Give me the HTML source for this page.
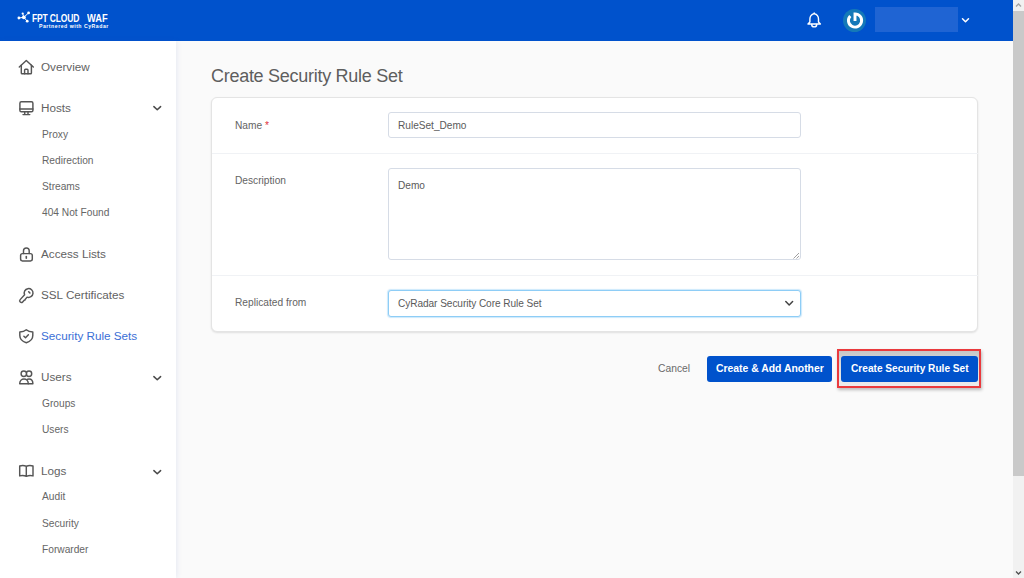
<!DOCTYPE html>
<html><head><meta charset="utf-8">
<style>
*{margin:0;padding:0;box-sizing:border-box}
html,body{width:1024px;height:578px;overflow:hidden;background:#fafafa;font-family:"Liberation Sans",sans-serif}
.a{position:absolute}
svg{position:absolute;overflow:visible}
.t{position:absolute;white-space:nowrap;line-height:1}
#hdr{left:0;top:0;width:1013px;height:41px;background:#0052cc}
#sb{left:0;top:41px;width:175.5px;height:537px;background:#fff;box-shadow:1px 0 5px rgba(60,90,190,.10)}
.m{font-size:11.7px;color:#626262;left:41px}
.s{font-size:10.2px;color:#666;left:42px}
.ico{left:14px;width:26px;height:24px;fill:none;stroke:#555;stroke-width:1.45;stroke-linecap:round;stroke-linejoin:round}
.chv{left:146px;width:22px;height:20px;fill:none;stroke:#4a4a4a;stroke-width:1.5;stroke-linecap:round;stroke-linejoin:round}
#card{left:210.5px;top:96.5px;width:767.5px;height:235px;background:#fff;border:1px solid #e4e4e4;border-radius:6px;box-shadow:0 1px 2px rgba(0,0,0,.11)}
.lbl{font-size:10.2px;color:#646464;left:235px}
.inp{position:absolute;left:387.5px;width:413.5px;background:#fff;border:1px solid #d6dce6;border-radius:3px}
.val{font-size:10.1px;color:#5a5a5a;left:398px}
.sep{position:absolute;left:211.5px;width:766px;height:1px;background:#f0f2f5}
.btn{position:absolute;top:356px;height:26px;background:#0052cc;border-radius:3px}
.bt{font-size:10.4px;font-weight:bold;color:#fff}
</style></head><body>
<div id="hdr" class="a"></div>

<!-- logo -->
<svg style="left:0;top:0;width:40px;height:40px" viewBox="0 0 40 40">
 <g stroke="#fff" stroke-width="1" fill="none">
  <line x1="23.8" y1="17.3" x2="18.9" y2="18"/>
  <line x1="23.8" y1="17.3" x2="22.7" y2="13.5"/>
  <line x1="23.8" y1="17.3" x2="28.6" y2="12.9"/>
  <line x1="23.8" y1="17.3" x2="27.2" y2="21.2"/>
 </g>
 <g fill="#fff">
  <circle cx="23.8" cy="17.3" r="1.9"/>
  <circle cx="18.9" cy="18" r="1.4"/>
  <circle cx="22.7" cy="13.5" r="1.1"/>
  <circle cx="28.6" cy="12.9" r="1.4"/>
  <circle cx="27.2" cy="21.2" r="1.4"/>
 </g>
</svg>
<div class="t" style="left:31.5px;top:12.6px;font-size:11.2px;font-weight:bold;color:#fff;transform:scaleX(.76);transform-origin:0 0;letter-spacing:-0.2px">FPT CLOUD</div>
<div class="t" style="left:86.5px;top:12.6px;font-size:11.2px;font-weight:bold;color:#fff;transform:scaleX(.83);transform-origin:0 0">WAF</div>
<div class="t" style="left:39px;top:23.6px;font-size:5.2px;font-weight:bold;color:#fff;letter-spacing:0.5px">Partnered with CyRadar</div>

<!-- bell -->
<svg style="left:800px;top:8px;width:28px;height:24px;fill:none;stroke:#fff;stroke-width:1.4;stroke-linejoin:round;stroke-linecap:round" viewBox="0 0 28 24">
 <path d="M14.2,5.6 C11.5,6.3 9.9,8.5 9.9,11 V14 L8,16 H20.4 L18.5,14 V11 C18.5,8.5 16.9,6.3 14.2,5.6Z"/>
 <path d="M11.7,16.4 A2.5,2.5 0 0 0 16.7,16.4"/>
 <path d="M14.2,5.6 V4.9"/>
</svg>
<!-- gravatar -->
<div class="a" style="left:843px;top:8.7px;width:23px;height:23px;border-radius:50%;background:#1479b8"></div>
<svg style="left:0;top:0;width:1px;height:1px;fill:none;stroke:#fff;stroke-width:2.9" viewBox="0 0 1 1">
 <path d="M855,21 V13.9 A6.6,6.6 0 1 1 850.3,15.9"/>
</svg>
<div class="a" style="left:875px;top:7px;width:83px;height:25px;background:#1f64d3"></div>
<svg style="left:0;top:0;width:1px;height:1px;fill:none;stroke:#fff;stroke-width:1.5;stroke-linecap:round;stroke-linejoin:round" viewBox="0 0 1 1">
 <path d="M962.5,18.8 L965.5,21.8 L968.5,18.8"/>
</svg>

<div id="sb" class="a"></div>

<!-- scrollbar -->
<div class="a" style="left:1013px;top:0;width:11px;height:578px;background:#f1f1f1"></div>
<div class="a" style="left:1013px;top:11px;width:11px;height:465px;background:#c9c9c9"></div>
<svg style="left:1013px;top:0;width:11px;height:578px;fill:none;stroke:#a3a3a3;stroke-width:1.3" viewBox="0 0 11 578">
 <path d="M3,6.5 L5.5,4 L8,6.5"/>
 <path d="M3,571.5 L5.5,574 L8,571.5" stroke="#505050"/>
</svg>

<!-- sidebar icons -->
<svg class="ico" style="top:56px" viewBox="0 0 26 24">
 <path d="M5.3,11 L12.3,4.5 L19.3,11"/>
 <path d="M7.3,9.3 V17 Q7.3,17.8 8.1,17.8 H16.6 Q17.4,17.8 17.4,17 V9.3"/>
 <path d="M10.6,17.8 V14.2 Q10.6,13.3 11.5,13.3 H13.1 Q14,13.3 14,14.2 V17.8"/>
</svg>
<svg class="ico" style="top:97px" viewBox="0 0 26 24">
 <rect x="5.9" y="4.8" width="13" height="10" rx="1.4"/>
 <path d="M5.9,11.9 H18.9"/>
 <path d="M10.7,14.8 V17.6 M14,14.8 V17.6 M9,17.6 H15.8"/>
</svg>
<svg class="ico" style="top:243px" viewBox="0 0 26 24">
 <rect x="6.6" y="10.6" width="11.7" height="7.3" rx="1.8"/>
 <path d="M9.5,10.6 V7.8 A2.85,2.85 0 0 1 15.2,7.8 V10.6"/>
 <path d="M12.3,13.6 V15.2" stroke-width="1.6"/>
</svg>
<svg class="ico" style="top:284px" viewBox="0 0 26 24">
 <path d="M10.60,10.82 L6.15,15.63 A1.7,1.7 0 0 0 8.65,17.94 L10.2,16.3 L10.9,16.1 L11.3,15.2 L13.09,13.13 A4.4,4.4 0 1 0 10.60,10.82 Z"/>
 <path d="M14.7,7.8 L15.9,9" stroke-width="1.6"/>
</svg>
<svg class="ico" style="top:325px" viewBox="0 0 26 24">
 <path d="M12.3,4.7 C10.5,6.2 8.5,6.8 5.8,7 V10.5 C5.8,14.3 8.5,16.5 12.3,17.8 C16.1,16.5 18.8,14.3 18.8,10.5 V7 C16.1,6.8 14.1,6.2 12.3,4.7Z"/>
 <path d="M9.9,11.3 L11.5,12.8 L14.4,9.8"/>
</svg>
<svg class="ico" style="top:366px" viewBox="0 0 26 24">
 <circle cx="15.0" cy="7.7" r="2.7"/>
 <path d="M14.2,17.8 H18.9 C18.9,14.6 17,12.9 15,12.9 C14,12.9 13.2,13.3 12.6,13.8"/>
 <circle cx="9.8" cy="7.7" r="2.7" fill="#fff"/>
 <path d="M5.7,17.8 C5.7,14.6 7.8,12.9 10,12.9 C12.2,12.9 14.3,14.6 14.3,17.8 Z" fill="#fff"/>
</svg>
<svg class="ico" style="top:459px" viewBox="0 0 26 24">
 <path d="M5.7,7 Q9,6 12.3,7.2 Q15.6,6 19,7 V16.9 Q15.6,15.9 12.3,17.3 Q9,15.9 5.7,16.9 Z M12.3,7.2 V17.3"/>
</svg>
<svg class="chv" style="top:98px" viewBox="0 0 22 20"><path d="M7.9,8.6 L11.25,11.8 L14.6,8.6"/></svg>
<svg class="chv" style="top:368px" viewBox="0 0 22 20"><path d="M7.9,8.6 L11.25,11.8 L14.6,8.6"/></svg>
<svg class="chv" style="top:462px" viewBox="0 0 22 20"><path d="M7.9,8.6 L11.25,11.8 L14.6,8.6"/></svg>

<!-- sidebar text -->
<div class="t m" style="top:61.3px">Overview</div>
<div class="t m" style="top:102.4px">Hosts</div>
<div class="t s" style="top:129.7px">Proxy</div>
<div class="t s" style="top:155.7px">Redirection</div>
<div class="t s" style="top:182px">Streams</div>
<div class="t s" style="top:208.2px">404 Not Found</div>
<div class="t m" style="top:248.2px">Access Lists</div>
<div class="t m" style="top:289.1px">SSL Certificates</div>
<div class="t m" style="top:330.2px;color:#3b6fd6">Security Rule Sets</div>
<div class="t m" style="top:371.4px">Users</div>
<div class="t s" style="top:398.8px">Groups</div>
<div class="t s" style="top:424.8px">Users</div>
<div class="t m" style="top:465.3px">Logs</div>
<div class="t s" style="top:492.3px">Audit</div>
<div class="t s" style="top:518.6px">Security</div>
<div class="t s" style="top:544.6px">Forwarder</div>

<!-- title -->
<div class="t" style="left:211px;top:67.3px;font-size:18px;letter-spacing:-0.28px;color:#5e5e5e">Create Security Rule Set</div>

<div id="card" class="a"></div>
<div class="sep" style="top:153px"></div>
<div class="sep" style="top:275px"></div>

<div class="t lbl" style="top:121px">Name <span style="color:#e0303a">*</span></div>
<div class="inp" style="top:112px;height:26px"></div>
<div class="t val" style="top:120.6px">RuleSet_Demo</div>

<div class="t lbl" style="top:175.8px">Description</div>
<div class="inp" style="top:168px;height:92.3px"></div>
<div class="t val" style="top:180.9px">Demo</div>
<svg style="left:0;top:0;width:1px;height:1px;fill:none;stroke:#888;stroke-width:0.8" viewBox="0 0 1 1">
 <path d="M793.5,258.5 L799,253 M796.5,258.5 L799,256"/>
</svg>

<div class="t lbl" style="top:297.6px">Replicated from</div>
<div class="inp" style="top:290px;height:27px;border-color:#8ecdf6;box-shadow:0 0 1px 1px rgba(142,205,246,.45)"></div>
<div class="t val" style="top:298.6px;letter-spacing:-0.06px">CyRadar Security Core Rule Set</div>
<svg style="left:0;top:0;width:1px;height:1px;fill:none;stroke:#444;stroke-width:1.5;stroke-linecap:round;stroke-linejoin:round" viewBox="0 0 1 1">
 <path d="M785.8,301.5 L789.2,305 L792.6,301.5"/>
</svg>

<div class="t" style="left:658px;top:363.5px;font-size:10.3px;color:#6a6a6a">Cancel</div>
<div class="btn" style="left:707px;width:125px"></div>
<div class="t bt" style="left:716px;top:364.2px">Create &amp; Add Another</div>
<div class="a" style="left:837px;top:349.2px;width:144.3px;height:38.4px;border:2px solid #ea3a3d;background:linear-gradient(#c6c6c6,#dcdcdc 40%,#ececec);box-shadow:1px 2px 3px rgba(0,0,0,.25)"></div>
<div class="btn" style="left:841px;width:137px"></div>
<div class="t bt" style="left:851px;top:364.4px;font-size:10.15px">Create Security Rule Set</div>

</body></html>
